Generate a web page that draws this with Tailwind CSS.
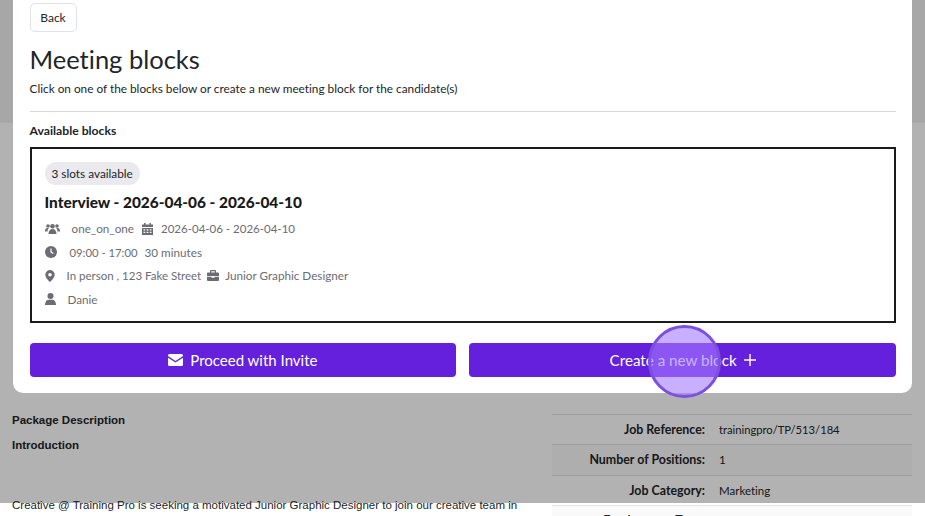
<!DOCTYPE html>
<html lang="en">
<head>
  <meta charset="UTF-8">
  <title>Meeting blocks</title>
  <script src="https://cdn.jsdelivr.net/npm/@tailwindcss/browser@4"></script>
</head>
<body class="bg-white font-['Lato',sans-serif] [font-variant-ligatures:none] text-[#212529] overflow-hidden">
  <div class="relative w-[925px] h-[516px] overflow-hidden">

    <!-- job page behind the modal -->
    <div class="h-[123px] bg-[#f0f0f0]"></div>
    <div class="flex justify-between pl-3 pr-[13px] pt-[291px]">
      <div class="w-[520px] -mt-[1px] text-[11.5px] font-['Liberation_Sans',sans-serif]">
        <p class="font-bold leading-[15px]">Package Description</p>
        <p class="font-bold leading-[15px] mt-[10px]">Introduction</p>
        <p class="mt-[45px] leading-[15px] whitespace-nowrap">Creative @ Training Pro is seeking a motivated Junior Graphic Designer to join our creative team in</p>
      </div>
      <div class="w-[360px] text-[11.5px]">
        <div class="flex h-[30.4px] items-baseline pt-[6px] border-t border-[#e4e4e4]">
          <span class="w-[153px] text-right font-bold text-[12.4px]">Job Reference:</span>
          <span class="ml-[14px] text-[11.2px]">trainingpro/TP/513/184</span>
        </div>
        <div class="flex h-[30.4px] items-baseline pt-[6px] border-t border-[#e4e4e4] bg-[#f9f9f9]">
          <span class="w-[153px] text-right font-bold text-[12.4px]">Number of Positions:</span>
          <span class="ml-[14px]">1</span>
        </div>
        <div class="flex h-[30.4px] items-baseline pt-[6px] border-t border-[#e4e4e4]">
          <span class="w-[153px] text-right font-bold text-[12.4px]">Job Category:</span>
          <span class="ml-[14px]">Marketing</span>
        </div>
        <div class="flex h-[30.4px] items-baseline pt-[6px] border-t border-[#e4e4e4] bg-[#f9f9f9]">
          <span class="w-[153px] text-right font-bold text-[12.4px]">Employment Type:</span>
          <span class="ml-[14px]">Full Time</span>
        </div>
      </div>
    </div>

    <!-- dim backdrop -->
    <div class="absolute left-0 top-0 w-full h-[503px] bg-black/30"></div>

    <!-- modal -->
    <div class="absolute left-[13px] top-[-20px] w-[899px] h-[413px] bg-white rounded-b-[10px] pl-[16.5px] pr-[16px] pt-[23px] flex flex-col">
      <button class="self-start w-[47px] h-[29px] pt-[1px] rounded-[5px] border border-[#dee2e6] text-[12px] text-[#212529]">Back</button>
      <h1 class="mt-[11px] text-[25.5px] leading-[32px] text-[#212529]">Meeting blocks</h1>
      <p class="mt-[6px] text-[11.8px] leading-[16px] text-[#212529]">Click on one of the blocks below or create a new meeting block for the candidate(s)</p>
      <hr class="mt-[14px] border-[#d9d9d9]">
      <p class="mt-[11px] text-[12.2px] leading-[15px] font-bold">Available blocks</p>

      <div class="mt-[9px] h-[176px] border-2 border-[#1a1a1a] px-[13px] pt-[13px]">
        <span class="block w-fit h-[23px] px-[7px] rounded-full bg-[#e9e9ee] text-[11.8px] leading-[23px]">3 slots available</span>
        <h2 class="mt-[7px] text-[15.4px] leading-[20px] font-black text-[#1a1a1a]">Interview - 2026-04-06 - 2026-04-10</h2>
        <div class="mt-[8px] flex flex-col gap-[6.5px] text-[11.7px] leading-[17px] text-[#6c6c72]">
          <div class="flex items-center">
            <svg class="w-[15px] h-[12px]" viewBox="0 0 15 12" fill="currentColor"><circle cx="3" cy="3" r="1.8"/><circle cx="12" cy="3" r="1.8"/><circle cx="7.500" cy="3.200" r="2.300"/><path d="M0 8c0-2 1-3 2.500-3h1.500c-1 1-1.500 2-1.500 3.500H0zM15 8c0-2-1-3-2.500-3H11c1 1 1.500 2 1.500 3.500H15zM3.500 11c0-3 1.500-5 4-5s4 2 4 5z"/></svg>
            <span class="ml-[12px]">one_on_one</span>
            <svg class="ml-[8px] w-[11px] h-[12px]" viewBox="0 0 11 12" fill="currentColor"><path d="M2 0h1.500v1.500h4V0H9v1.500h2V4H0V1.500h2zM0 5h11v7H0zm1.500 1.200v1.300h1.700V6.200zm3.100 0v1.300h1.800V6.200zm3.200 0v1.300h1.700V6.200zM1.500 8.700V10h1.700V8.700zm3.100 0V10h1.800V8.700zm3.200 0V10h1.700V8.700z" fill-rule="evenodd"/></svg>
            <span class="ml-[8px] text-[11.5px]">2026-04-06 - 2026-04-10</span>
          </div>
          <div class="flex items-center">
            <svg class="w-[12px] h-[12px]" viewBox="0 0 12 12"><circle cx="6" cy="6" r="6" fill="currentColor"/><path d="M6 2.500V6l2.300 1.600" fill="none" stroke="#fff" stroke-width="1.200"/></svg>
            <span class="ml-[13px] text-[11.3px]">09:00 - 17:00</span>
            <span class="ml-[7px]">30 minutes</span>
          </div>
          <div class="flex items-center">
            <svg class="w-[10px] h-[12px]" viewBox="0 0 10 12" fill="currentColor"><path fill-rule="evenodd" d="M5 0a4.700 4.700 0 0 1 4.700 4.700C9.700 7.500 6.500 10.500 5 12 3.500 10.500.3 7.500.3 4.700A4.700 4.700 0 0 1 5 0zm0 3a1.800 1.800 0 1 0 0 3.600A1.800 1.800 0 0 0 5 3z"/></svg>
            <span class="ml-[12px] text-[11.5px]">In person , 123 Fake Street</span>
            <svg class="ml-[6px] w-[12px] h-[11px]" viewBox="0 0 12 11" fill="currentColor"><path fill-rule="evenodd" d="M4 0h4a1 1 0 0 1 1 1v1.500h2a1 1 0 0 1 1 1V6H0V3.500a1 1 0 0 1 1-1h2V1a1 1 0 0 1 1-1zm.2 1.200v1.300h3.600V1.200zM0 6.800h4.500v1h3v-1H12V10a1 1 0 0 1-1 1H1a1 1 0 0 1-1-1z"/></svg>
            <span class="ml-[6px]">Junior Graphic Designer</span>
          </div>
          <div class="flex items-center">
            <svg class="w-[11px] h-[12px]" viewBox="0 0 11 12" fill="currentColor"><circle cx="5.500" cy="3" r="3"/><path d="M0 12c0-3.500 2-5.200 3.500-5.200h4C9 6.800 11 8.500 11 12z"/></svg>
            <span class="ml-[12px]">Danie</span>
          </div>
        </div>
      </div>

      <div class="mt-[20px] flex gap-[13px]">
        <button class="flex-1 h-[34px] rounded-[4px] bg-[#6520dd] text-white text-[15px] flex items-center justify-center gap-[7px]">
          <svg class="w-[15px] h-[12px]" viewBox="0 0 15 12" fill="#fff"><path d="M1.500 0h12A1.500 1.500 0 0 1 15 1.500v.6L7.500 7 0 2.100v-.6A1.500 1.500 0 0 1 1.500 0zM0 3.800l7.500 4.800L15 3.800v6.700a1.500 1.500 0 0 1-1.500 1.500h-12A1.500 1.500 0 0 1 0 10.500z"/></svg>
          Proceed with Invite
        </button>
        <button class="flex-1 h-[34px] rounded-[4px] bg-[#6520dd] text-white text-[15.2px] flex items-center justify-center gap-[7px]">
          Create a new block
          <svg class="w-[12px] h-[12px]" viewBox="0 0 12 12" fill="none" stroke="#fff" stroke-width="1.400"><path d="M6 0v12M0 6h12"/></svg>
        </button>
      </div>
    </div>

    <!-- click marker -->
    <div class="absolute left-[648px] top-[325px] w-[73px] h-[73px] rounded-full bg-[#a57cff]/60 border-[3px] border-[#7b50e0]"></div>
  </div>
</body>
</html>
